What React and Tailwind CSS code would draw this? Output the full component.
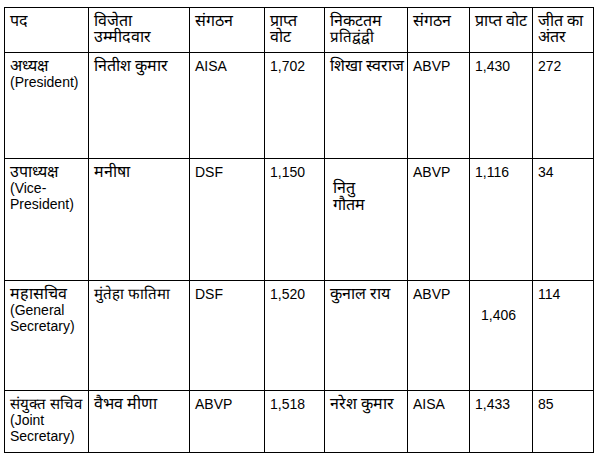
import React from "react";

// Devanagari fallback font renders small, so Hindi lines get a bigger size
const hi = "text-[16px] leading-[16px] whitespace-nowrap";
const en = "text-[14px] leading-[16px]";

const Lines = ({ lines }) =>
  lines.map((l, i) => (
    <div key={i} className={/[a-zA-Z0-9]/.test(l) ? en : l.length > 11 ? "text-[15px] leading-[16px] whitespace-nowrap" : hi}>
      {l}
    </div>
  ));

const rows = [
  {
    h: "h-[106px]",
    post: ["अध्यक्ष", "(President)"],
    winner: "नितीश कुमार",
    org: "AISA",
    votes: "1,702",
    rival: "शिखा स्वराज",
    rivalOrg: "ABVP",
    rivalVotes: "1,430",
    margin: "272",
  },
  {
    h: "h-[122px]",
    post: ["उपाध्यक्ष", "(Vice-", "President)"],
    winner: "मनीषा",
    org: "DSF",
    votes: "1,150",
    rival: "nitu",
    rivalOrg: "ABVP",
    rivalVotes: "1,116",
    margin: "34",
  },
  {
    h: "h-[110px]",
    post: ["महासचिव", "(General", "Secretary)"],
    winner: "मुंतेहा फातिमा",
    org: "DSF",
    votes: "1,520",
    rival: "कुनाल राय",
    rivalOrg: "ABVP",
    rivalVotes: "shifted",
    margin: "114",
  },
  {
    h: "h-[62px]",
    post: ["संयुक्त सचिव", "(Joint", "Secretary)"],
    winner: "वैभव मीणा",
    org: "ABVP",
    votes: "1,518",
    rival: "नरेश कुमार",
    rivalOrg: "AISA",
    rivalVotes: "1,433",
    margin: "85",
  },
];

const headers = [
  ["पद"],
  ["विजेता", "उम्मीदवार"],
  ["संगठन"],
  ["प्राप्त", "वोट"],
  ["निकटतम", "प्रतिद्वंद्वी"],
  ["संगठन"],
  ["प्राप्त वोट"],
  ["जीत का", "अंतर"],
];

const cell = "border border-black align-top pl-[5px] pr-[4px] pt-[5px] pb-0 text-left font-normal";

export default function App() {
  return (
    <div className="w-[600px] h-[462px] bg-white pl-[4px] pt-[7px] text-[14px] leading-[16px] text-black font-['Liberation_Sans',Arial,sans-serif]">
      <table className="table-fixed border-collapse w-[589px]">
        <colgroup>
          <col className="w-[84px]" />
          <col className="w-[101px]" />
          <col className="w-[75px]" />
          <col className="w-[60px]" />
          <col className="w-[83px]" />
          <col className="w-[62px]" />
          <col className="w-[63px]" />
          <col className="w-[61px]" />
        </colgroup>
        <thead>
          <tr className="h-[45px]">
            {headers.map((h, i) => (
              <th key={i} className={cell}>
                <Lines lines={h} />
              </th>
            ))}
          </tr>
        </thead>
        <tbody>
          {rows.map((r) => (
            <tr key={r.winner} className={r.h}>
              <td className={cell}>
                <Lines lines={r.post} />
              </td>
              <td className={cell}>
                <Lines lines={[r.winner]} />
              </td>
              <td className={cell}>{r.org}</td>
              <td className={cell}>{r.votes}</td>
              <td className={cell}>
                {r.rival === "nitu" ? (
                  <div className="mt-[15px] pl-[3px]">
                    <div className="text-[16px] leading-[17px]">नितु</div>
                    <div className="text-[16px] leading-[17px]">गौतम</div>
                  </div>
                ) : (
                  <Lines lines={[r.rival]} />
                )}
              </td>
              <td className={cell}>{r.rivalOrg}</td>
              <td className={cell}>
                {r.rivalVotes === "shifted" ? (
                  <div className="mt-[21px] pl-[6px]">1,406</div>
                ) : (
                  r.rivalVotes
                )}
              </td>
              <td className={cell}>{r.margin}</td>
            </tr>
          ))}
        </tbody>
      </table>
    </div>
  );
}
